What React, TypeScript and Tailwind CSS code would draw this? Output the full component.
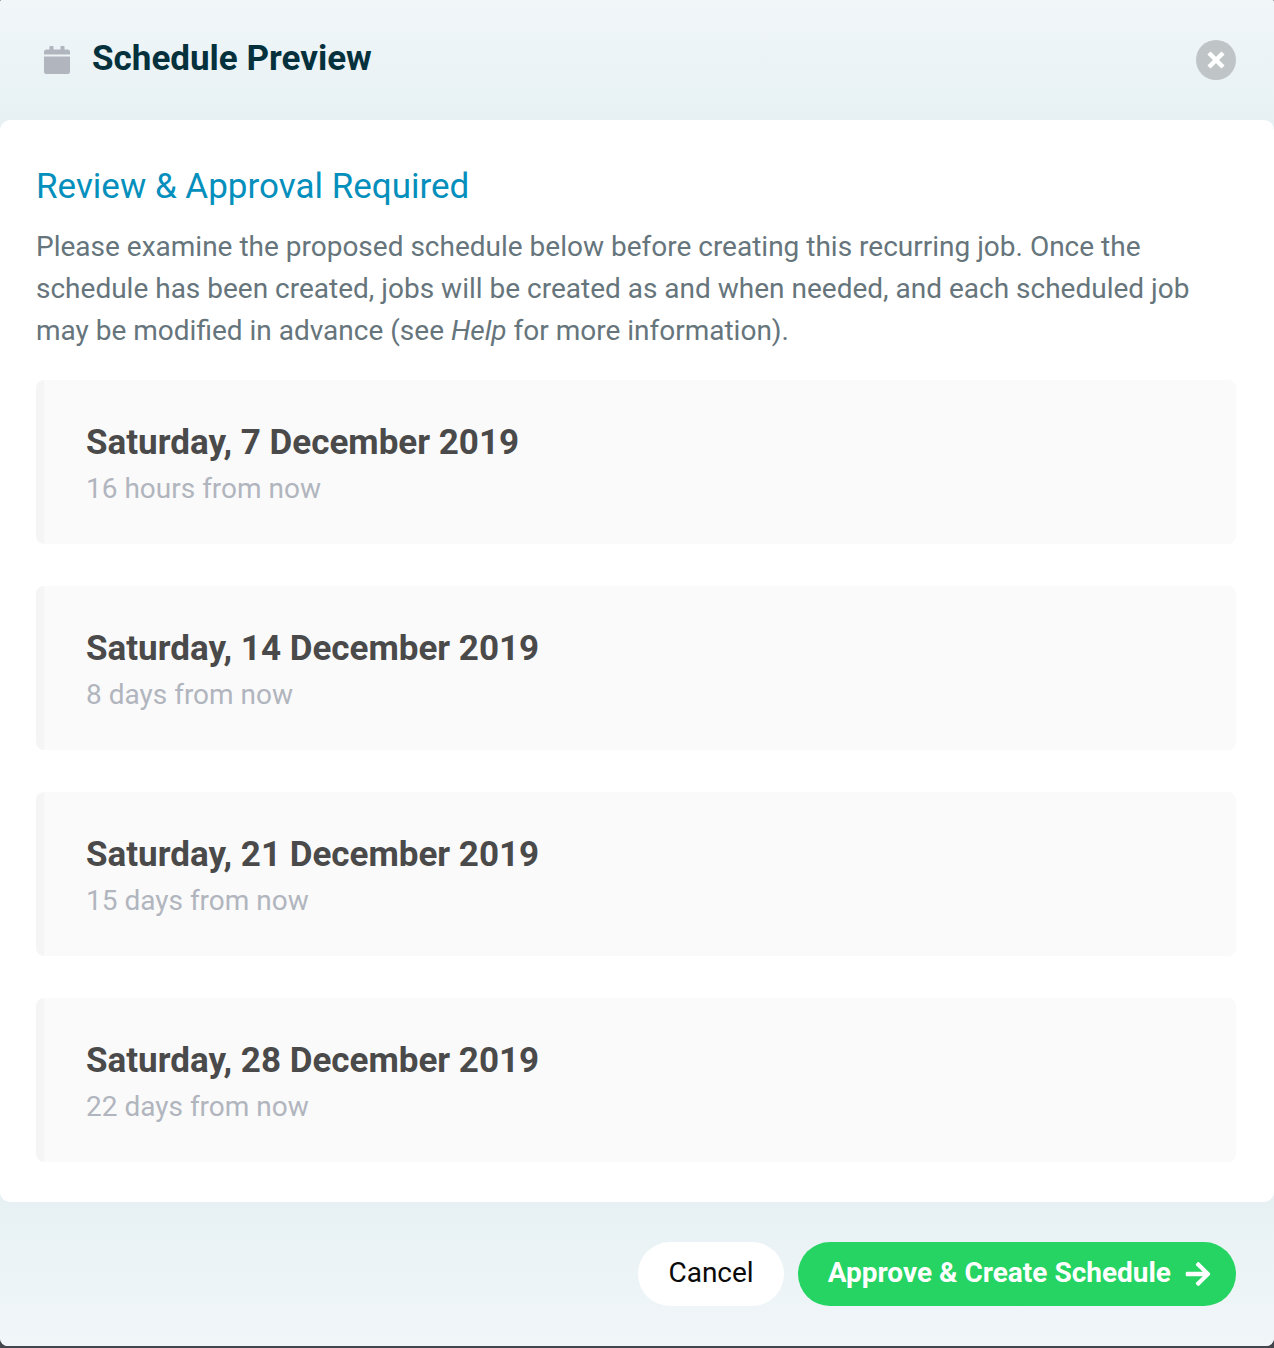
import { FaArrowRight } from "react-icons/fa";

const jobs = [
  { date: "Saturday, 7 December 2019", when: "16 hours from now" },
  { date: "Saturday, 14 December 2019", when: "8 days from now" },
  { date: "Saturday, 21 December 2019", when: "15 days from now" },
  { date: "Saturday, 28 December 2019", when: "22 days from now" },
];

export default function App() {
  return (
    <div className="bg-[#43474d] pb-0.5 font-[Roboto,sans-serif]">
      <section aria-labelledby="title" className="overflow-hidden rounded-t-xs rounded-b-lg bg-[#e7f1f3]">
        <header className="flex h-30 items-center justify-between bg-linear-to-b from-[#f1f6f9] to-[#e7f1f3] pr-9.5 pl-11">
          <div className="flex items-center gap-5.5">
            <svg aria-hidden="true" viewBox="0 0 26 28" className="h-7 w-6.5 fill-[#b1b5be]">
              <path d="M0 8.500V6a2.500 2.500 0 0 1 2.500-2.500h3V.7a.7.7 0 0 1 .7-.7h2.600a.7.7 0 0 1 .7.7v2.800h7V.7a.7.7 0 0 1 .7-.7h2.600a.7.7 0 0 1 .7.7v2.800h3A2.500 2.500 0 0 1 26 6v2.500zM0 10.500h26v15a2.500 2.500 0 0 1-2.500 2.500h-21A2.500 2.500 0 0 1 0 25.500z" />
            </svg>
            <h1 id="title" className="pb-0.5 text-[35px] leading-10 font-bold text-[#05313d]">Schedule Preview</h1>
          </div>
          <button type="button" aria-label="Close" className="flex size-10 items-center justify-center rounded-full bg-[#bfc4c7]">
            <svg aria-hidden="true" viewBox="0 0 18 18" className="size-4.5 stroke-white" strokeWidth="4.500">
              <path d="M2 2 16 16M16 2 2 16" />
            </svg>
          </button>
        </header>
        <main className="rounded-[10px] bg-white pt-11 pr-9.5 pb-10 pl-9">
          <h2 className="text-[35px] leading-[46px] text-[#058fbc]">Review &amp; Approval Required</h2>
          <p className="mt-4 text-[28px] leading-10.5 text-[#66757c]">
            Please examine the proposed schedule below before creating this recurring job. Once the schedule has been created, jobs will be created as and when needed, and each scheduled job may be modified in advance (see <em>Help</em> for more information).
          </p>
          <ul className="mt-7 flex flex-col gap-10.5">
            {jobs.map((job) => (
              <li key={job.date} className="rounded-lg border-l-8 border-[#f5f5f5] bg-[#fafafa] pt-10 pb-8.5 pl-10.5">
                <h3 className="text-[35px] leading-[46px] font-bold text-[#4a4a4a]">{job.date}</h3>
                <p className="mt-0.5 text-[28px] leading-10.5 text-[#b1b5be]">{job.when}</p>
              </li>
            ))}
          </ul>
        </main>
        <footer className="flex h-36 items-center justify-end gap-3.5 bg-linear-to-b from-[#e7f1f3] to-[#f1f6f9] pr-9.5">
          <button type="button" className="h-16 rounded-full bg-white px-7.5 pb-0.5 text-[28px] text-[#0a0a0a]">Cancel</button>
          <button type="button" className="flex h-16 items-center gap-[13px] rounded-full bg-[#25d462] pr-6 pl-7.5 text-[28px] font-bold text-white">
            <span className="pb-0.5">Approve &amp; Create Schedule</span>
            <FaArrowRight aria-hidden="true" />
          </button>
        </footer>
      </section>
    </div>
  );
}
